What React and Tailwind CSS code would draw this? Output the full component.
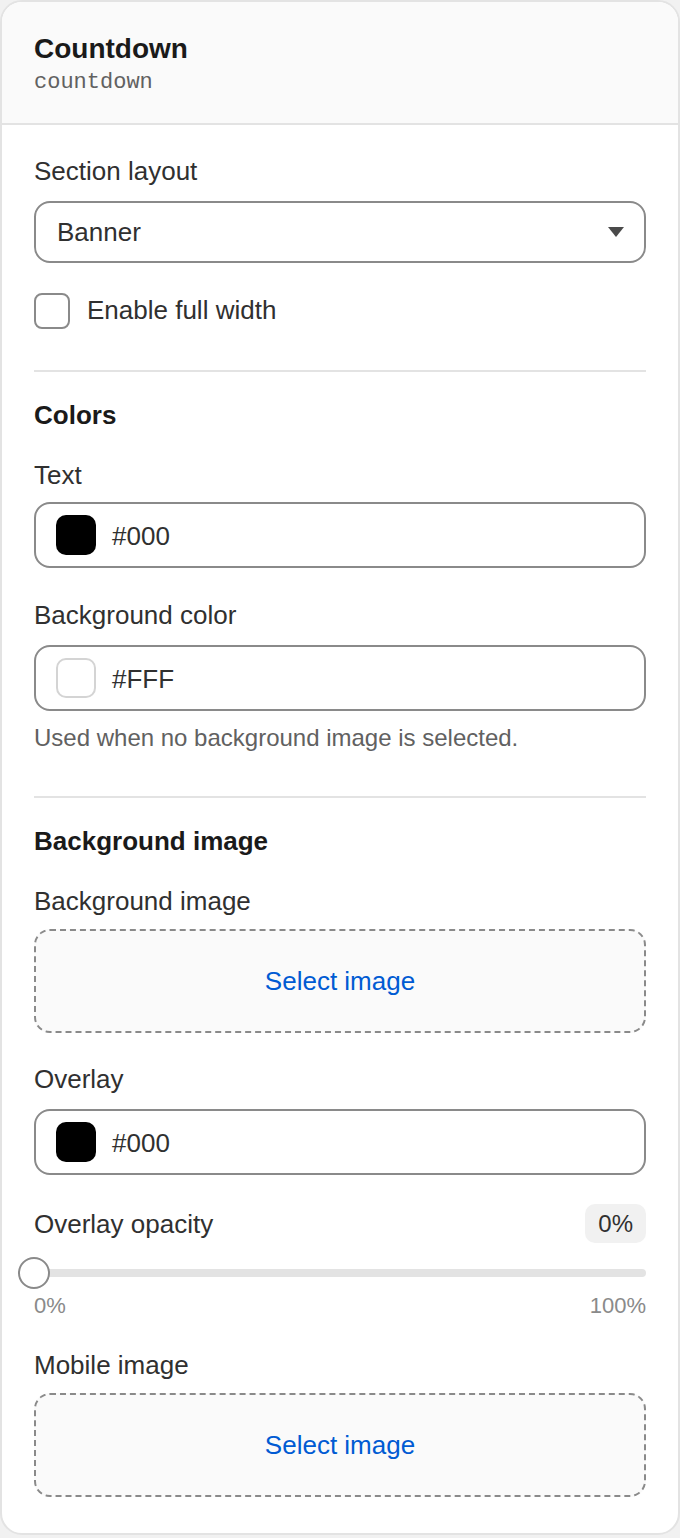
import React from 'react'

const font = { fontFamily: '"Liberation Sans", Arial, sans-serif' }

function Label({ children, className = '' }) {
    return <div className={`text-[26px] leading-[36px] text-[#303030] ${className}`}>{children}</div>
}

function Heading({ children, className = '' }) {
    return <div className={`text-[26px] leading-[36px] font-bold text-[#1a1a1a] ${className}`}>{children}</div>
}

function ColorInput({ color, value, className = '', light }) {
    return (
        <div className={`h-[66px] rounded-[16px] border-2 border-[#8a8a8a] bg-white flex items-center pl-[20px] gap-[16px] ${className}`}>
            <div
                className={`w-[40px] h-[40px] rounded-[10px] ${light ? 'border-2 border-[#d4d4d4]' : ''}`}
                style={{ backgroundColor: color }}
            />
            <span className="text-[26px] leading-[36px] pt-[2px] text-[#303030]">{value}</span>
        </div>
    )
}

function Dropzone({ className = '' }) {
    return (
        <div className={`h-[104px] rounded-[16px] border-2 border-dashed border-[#8a8a8a] bg-[#fafafa] flex items-center justify-center ${className}`}>
            <span className="text-[26px] text-[#005bd3]">Select image</span>
        </div>
    )
}

export default function App() {
    return (
        <div className="bg-[#f1f1f1] min-h-[1538px]" style={font}>
            <div className="w-[680px] bg-white border-2 border-[#e3e3e3] rounded-[22px] overflow-hidden">
                <div className="bg-[#fafafa] border-b-2 border-[#e3e3e3] px-[32px] pt-[29px] pb-[25px]">
                    <div className="text-[28px] leading-[36px] font-bold text-[#1a1a1a]">Countdown</div>
                    <div className="mt-[1px] text-[22px] leading-[30px] text-[#616161]" style={{ fontFamily: '"Liberation Mono", monospace' }}>
                        countdown
                    </div>
                </div>

                <div className="px-[32px] pt-[28px] pb-[36px] flex flex-col">
                    <Label>Section layout</Label>
                    <div className="mt-[12px] h-[62px] rounded-[16px] border-2 border-[#8a8a8a] flex items-center justify-between pl-[21px] pr-[20px]">
                        <span className="text-[26px] text-[#303030]">Banner</span>
                        <svg width="16" height="10" viewBox="0 0 16 10">
                            <path d="M0 0 H16 L8 10 Z" fill="#4a4a4a" />
                        </svg>
                    </div>
                    <div className="mt-[30px] flex items-center gap-[17px] h-[36px]">
                        <div className="w-[36px] h-[36px] rounded-[8px] border-2 border-[#8a8a8a] bg-white" />
                        <span className="text-[26px] leading-[36px] -mt-[3px] text-[#303030]">Enable full width</span>
                    </div>

                    <div className="mt-[41px] h-[2px] bg-[#e3e3e3]" />

                    <Heading className="mt-[25px]">Colors</Heading>
                    <Label className="mt-[24px]">Text</Label>
                    <ColorInput className="mt-[9px]" color="#000" value="#000" />
                    <Label className="mt-[29px]">Background color</Label>
                    <ColorInput className="mt-[12px]" color="#fff" value="#FFF" light />
                    <div className="mt-[9px] text-[24px] leading-[36px] text-[#616161]">
                        Used when no background image is selected.
                    </div>

                    <div className="mt-[40px] h-[2px] bg-[#e3e3e3]" />

                    <Heading className="mt-[25px]">Background image</Heading>
                    <Label className="mt-[24px]">Background image</Label>
                    <Dropzone className="mt-[10px]" />

                    <Label className="mt-[28px]">Overlay</Label>
                    <ColorInput className="mt-[12px]" color="#000" value="#000" />

                    <div className="mt-[29px] flex items-center justify-between h-[39px]">
                        <Label>Overlay opacity</Label>
                        <div className="h-[39px] px-[13px] rounded-[10px] bg-[#f1f1f1] flex items-center text-[24px] text-[#303030]">
                            0%
                        </div>
                    </div>

                    <div className="mt-[14px] h-[32px] relative flex items-center">
                        <div className="w-full h-[8px] rounded-full bg-[#e3e3e3]" />
                        <div className="absolute left-[-16px] top-0 w-[32px] h-[32px] rounded-full bg-white border-2 border-[#8a8a8a]" />
                    </div>
                    <div className="mt-[2px] flex justify-between text-[22px] leading-[30px] text-[#8a8a8a]">
                        <span>0%</span>
                        <span>100%</span>
                    </div>

                    <Label className="mt-[26px]">Mobile image</Label>
                    <Dropzone className="mt-[10px]" />
                </div>
            </div>
        </div>
    )
}
